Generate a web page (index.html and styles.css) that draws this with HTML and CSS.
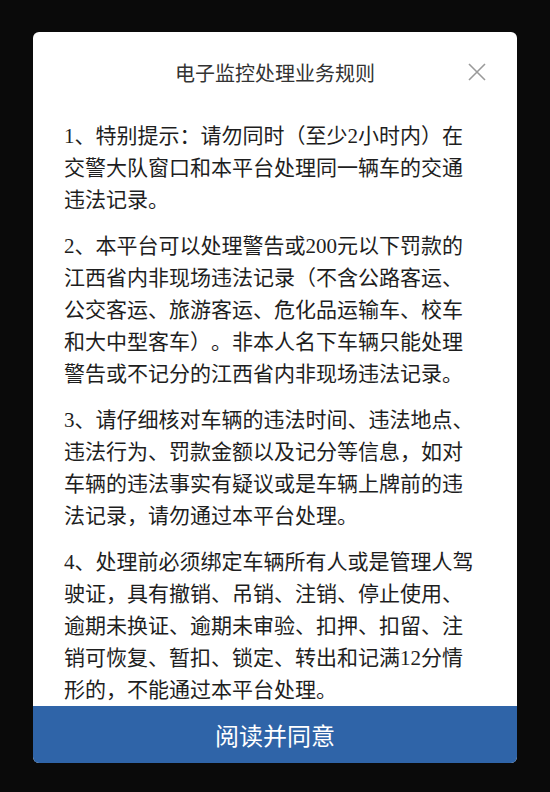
FILE: index.html
```html
<!DOCTYPE html>
<html lang="zh-CN">
<head>
<meta charset="utf-8">
<link rel="stylesheet" href="styles.css">
</head>
<body>
<div class="overlay">
  <div class="modal">
    <div class="modal-header">
      <div class="modal-title">电子监控处理业务规则</div>
      <span class="close" aria-label="关闭">
        <svg width="20" height="20" viewBox="0 0 20 20"><path d="M2 2 L18 18 M18 2 L2 18" stroke="#9a9a9a" stroke-width="1.6" fill="none"/></svg>
      </span>
    </div>
    <div class="modal-body">
      <p>1、特别提示：请勿同时（至少2小时内）在交警大队窗口和本平台处理同一辆车的交通违法记录。</p>
      <p>2、本平台可以处理警告或200元以下罚款的江西省内非现场违法记录（不含公路客运、公交客运、旅游客运、危化品运输车、校车和大中型客车）。非本人名下车辆只能处理警告或不记分的江西省内非现场违法记录。</p>
      <p>3、请仔细核对车辆的违法时间、违法地点、违法行为、罚款金额以及记分等信息，如对车辆的违法事实有疑议或是车辆上牌前的违法记录，请勿通过本平台处理。</p>
      <p>4、处理前必须绑定车辆所有人或是管理人驾驶证，具有撤销、吊销、注销、停止使用、逾期未换证、逾期未审验、扣押、扣留、注销可恢复、暂扣、锁定、转出和记满12分情形的，不能通过本平台处理。</p>
    </div>
    <div class="modal-footer">阅读并同意</div>
  </div>
</div>
</body>
</html>
```
FILE: styles.css
```css
html, body {
  margin: 0;
  padding: 0;
  background: #0a0a0a;
}
.overlay {
  width: 550px;
  height: 792px;
  padding-top: 32px;
  box-sizing: border-box;
  display: flex;
  justify-content: center;
}
.modal {
  width: 484px;
  height: 731px;
  background: #fff;
  border-radius: 6px;
  overflow: hidden;
  display: flex;
  flex-direction: column;
}
.modal-header {
  height: 80px;
  flex: none;
  position: relative;
  display: flex;
  align-items: center;
  justify-content: center;
}
.modal-title {
  font-family: "Noto Sans CJK SC", sans-serif;
  font-size: 20px;
  color: #333;
}
.close {
  position: absolute;
  right: 30px;
  top: 30px;
  width: 20px;
  height: 20px;
  display: block;
}
.close svg { display: block; }
.modal-body {
  flex: 1;
  overflow: hidden;
  padding: 8px 40px 0 31px;
  font-family: "Liberation Serif", "Noto Sans CJK SC", serif;
  font-size: 21px;
  line-height: 32px;
  color: #1e1e1e;
  text-spacing-trim: space-all;
}
.modal-body p {
  margin: 0 0 14px 0;
}
.modal-footer {
  flex: none;
  height: 57px;
  background: #2f64a8;
  color: #fff;
  font-family: "Noto Sans CJK SC", sans-serif;
  font-size: 24px;
  display: flex;
  align-items: center;
  justify-content: center;
}
```
